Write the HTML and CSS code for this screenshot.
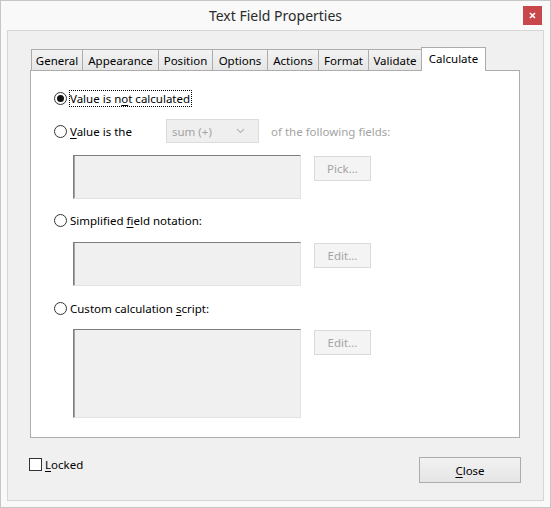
FILE: index.html
```html
<!DOCTYPE html>
<html>
<head>
<meta charset="utf-8">
<link rel="stylesheet" href="styles.css">
</head>
<body>
<div class="window">
  <div class="titlebar">
    <div class="title">Text Field Properties</div>
    <div class="close-x"><svg width="7" height="7" viewBox="0 0 7 7"><path d="M1 1L6 6M6 1L1 6" stroke="#fff" stroke-width="1.6" fill="none"/></svg></div>
  </div>
  <div class="client">
    <div class="tabs">
      <div class="tab t1">General</div>
      <div class="tab t2">Appearance</div>
      <div class="tab t3">Position</div>
      <div class="tab t4">Options</div>
      <div class="tab t5">Actions</div>
      <div class="tab t6">Format</div>
      <div class="tab t7">Validate</div>
      <div class="tab t8 active">Calculate</div>
    </div>
    <div class="panel">
      <div class="row r1">
        <span class="radio checked"></span>
        <span class="label focus">Value is n<u>o</u>t calculated</span>
      </div>
      <div class="row r2">
        <span class="radio"></span>
        <span class="label wide"><u>V</u>alue is the</span>
        <div class="select"><span>sum (+)</span><svg width="9" height="6" viewBox="0 0 9 6"><path d="M1 1L4.5 4.5L8 1" stroke="#b8b8b8" stroke-width="1.2" fill="none"/></svg></div>
        <span class="dim after">of the following fields:</span>
      </div>
      <div class="field f1">
        <div class="textbox short"></div>
        <div class="btn-dis">Pick...</div>
      </div>
      <div class="row r3">
        <span class="radio"></span>
        <span class="label">Simplified <u>f</u>ield notation:</span>
      </div>
      <div class="field f2">
        <div class="textbox short"></div>
        <div class="btn-dis">Edit...</div>
      </div>
      <div class="row r4">
        <span class="radio"></span>
        <span class="label">Custom calculation <u>s</u>cript:</span>
      </div>
      <div class="field f3">
        <div class="textbox tall"></div>
        <div class="btn-dis">Edit...</div>
      </div>
    </div>
    <div class="footer">
      <div class="check"><span class="box"></span><span class="check-label"><u>L</u>ocked</span></div>
      <div class="btn-close"><u>C</u>lose</div>
    </div>
  </div>
</div>
</body>
</html>
```
FILE: styles.css
```css
* { box-sizing: border-box; }
body {
  margin: 0;
  font-family: "Noto Sans", "Segoe UI", sans-serif;
  font-size: 11.5px;
  color: #000;
}
u { text-decoration-thickness: 1px; text-underline-offset: 2px; }
.window {
  width: 551px;
  height: 508px;
  border: 1px solid #c6c6c6;
  background: #f9f9f9;
  display: flex;
  flex-direction: column;
}
.titlebar {
  height: 29px;
  display: grid;
  grid-template-columns: 1fr auto 1fr;
  align-items: start;
}
.title {
  grid-column: 2;
  font-size: 14px;
  line-height: 30px;
  color: #2b2b2b;
}
.close-x {
  grid-column: 3;
  justify-self: end;
  width: 19px;
  height: 19px;
  margin: 5px 8px 0 0;
  background: #c7474a;
  display: flex;
  align-items: center;
  justify-content: center;
}
.client {
  flex: 1;
  margin: 0 6px 6px 6px;
  border: 1px solid #d6d6d6;
  background: #f0f0f0;
  padding: 16px 23px 0 22px;
  display: flex;
  flex-direction: column;
}
.tabs {
  display: flex;
  align-items: flex-end;
  height: 23px;
  padding-left: 1px;
}
.tab {
  height: 21px;
  border: 1px solid #acacac;
  border-bottom: none;
  background: linear-gradient(#f3f3f3, #e6e6e6);
  margin-left: -1px;
  text-align: center;
  line-height: 21px;
  white-space: nowrap;
}
.t1 { margin-left: 0; width: 52px; }
.t2 { width: 77px; }
.t3 { width: 55px; }
.t4 { width: 56px; }
.t5 { width: 52px; }
.t6 { width: 51px; }
.t7 { width: 54px; }
.t8 { width: 65px; }
.tab.active {
  height: 24px;
  margin-bottom: -1px;
  background: #fff;
  position: relative;
  z-index: 1;
  line-height: 21px;
}
.panel {
  height: 368px;
  background: #fff;
  border: 1px solid #adadad;
  padding: 18px 0 0 23px;
  display: flex;
  flex-direction: column;
}
.row {
  display: flex;
  align-items: center;
}
.radio {
  width: 13px;
  height: 13px;
  border: 1px solid #333;
  border-radius: 50%;
  background: #fff;
  display: flex;
  align-items: center;
  justify-content: center;
  flex: none;
}
.radio.checked::after {
  content: "";
  width: 7px;
  height: 7px;
  border-radius: 50%;
  background: #111;
}
.label {
  margin-left: 2px;
  border: 1px dotted transparent;
  padding: 0 1px 0 0;
  line-height: 15px;
  white-space: nowrap;
}
.label.focus { border-color: #000; }
.label.wide { width: 97px; }
.r1 { height: 17px; margin-top: 1px; }
.r2 { margin-top: 12px; }
.r3 { margin-top: 13px; height: 17px; }
.r4 { margin-top: 14px; height: 17px; }
.select {
  width: 93px;
  height: 24px;
  border: 1px solid #dcdcdc;
  background: #efefef;
  color: #a3a3a3;
  display: flex;
  align-items: center;
  justify-content: space-between;
  padding: 0 13px 0 5px;
}
.dim { color: #a3a3a3; white-space: nowrap; }
.after { margin-left: 12px; }
.field {
  display: flex;
  align-items: flex-start;
  gap: 13px;
  margin-left: 19px;
}
.f1 { margin-top: 12px; }
.f2 { margin-top: 13px; }
.f3 { margin-top: 12px; }
.textbox {
  width: 228px;
  background: #f0f0f0;
  border: 1px solid #e3e3e3;
  border-top-color: #7d7d7d;
  border-left-color: #7d7d7d;
  box-shadow: inset 1px 0 0 #a5a5a5;
}
.textbox.short { height: 44px; }
.textbox.tall { height: 89px; }
.btn-dis {
  width: 57px;
  height: 25px;
  margin-top: 1px;
  border: 1px solid #dadada;
  background: #f4f4f4;
  color: #a3a3a3;
  display: flex;
  align-items: center;
  justify-content: center;
}
.footer {
  margin-top: 19px;
  display: flex;
  justify-content: space-between;
  align-items: flex-start;
  margin-left: -1px;
  margin-right: -1px;
}
.check {
  display: flex;
  align-items: center;
  margin-top: 1px;
}
.box {
  width: 13px;
  height: 13px;
  border: 1px solid #333;
  background: #fff;
}
.check-label { margin-left: 3px; line-height: 13px; }
.btn-close {
  width: 102px;
  height: 26px;
  border: 1px solid #acacac;
  background: linear-gradient(#f2f2f2, #e5e5e5);
  display: flex;
  align-items: center;
  justify-content: center;
}
```
